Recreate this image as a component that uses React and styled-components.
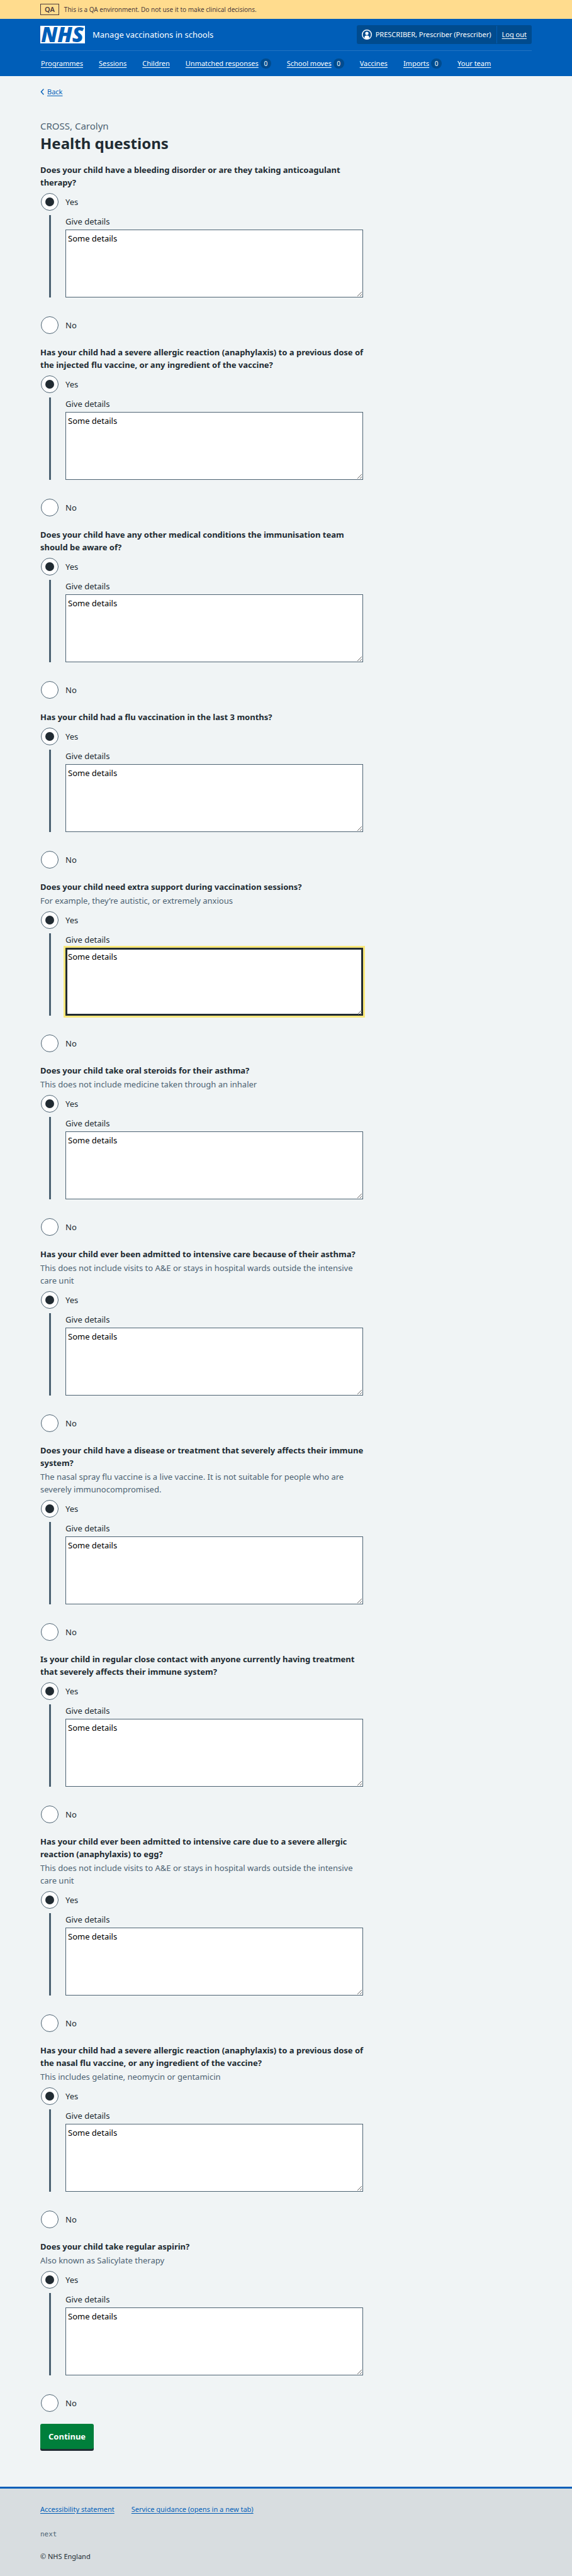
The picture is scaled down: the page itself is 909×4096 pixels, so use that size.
import React from "react";
import styled, { createGlobalStyle } from "styled-components";

const color = {
  blue: "#005eb8",
  darkBlue: "#004b8e",
  rule: "#2373c2",
  text: "#212b32",
  secondary: "#4c6272",
  page: "#f0f4f5",
  footer: "#d8dde0",
  green: "#007f3b",
  focus: "#fae87a",
  banner: "#ffdc8e",
  bannerText: "#4d3b3c",
};

const GlobalStyle = createGlobalStyle`
  *, *::before, *::after { box-sizing: border-box; }
  body {
    margin: 0;
    background: ${color.page};
    color: ${color.text};
    font-family: "Noto Sans", "Open Sans", sans-serif;
    font-size: 13px;
    line-height: 20px;
  }
`;

const Container = styled.div`
  max-width: 781px;
  margin: 0 auto;
`;

const Banner = styled.div`
  background: ${color.banner};
  color: ${color.bannerText};
`;

const BannerInner = styled(Container)`
  display: flex;
  align-items: center;
  gap: 8px;
  height: 30px;
  font-size: 10px;
`;

const EnvironmentTag = styled.strong`
  border: 1px solid currentColor;
  padding: 0 6px;
  font-size: 11px;
  font-weight: 600;
  line-height: 16px;
`;

const Header = styled.header`
  background: ${color.blue};
  color: #fff;
`;

const HeaderTop = styled(Container)`
  display: flex;
  align-items: center;
  height: 51px;
  border-bottom: 1px solid ${color.rule};
`;

const ServiceLink = styled.a`
  display: flex;
  align-items: center;
  gap: 12px;
  color: #fff;
  text-decoration: none;
`;

const Logo = styled.svg`
  display: block;
  width: 71px;
  height: 28px;
  overflow: visible;
  background: #fff;
  fill: ${color.blue};
  font-family: "Noto Sans", "Open Sans", sans-serif;
  font-size: 33px;
  font-style: italic;
  font-weight: 900;
`;

const Account = styled.div`
  display: flex;
  align-items: center;
  height: 30px;
  margin-left: auto;
  border-radius: 3px;
  background: ${color.darkBlue};
  font-size: 11px;
`;

const AccountItem = styled.div`
  display: flex;
  align-items: center;
  gap: 6px;
  height: 28px;
  padding: 0 8px;

  & + & {
    border-left: 1px solid ${color.blue};
  }
`;

const AccountIcon = styled.svg`
  width: 16px;
  height: 16px;
`;

const HeaderLink = styled.a`
  color: #fff;
  text-underline-offset: 2px;
`;

const Nav = styled(Container).attrs({ as: "nav" })`
  display: flex;
  align-items: center;
  gap: 25px;
  height: 40px;
  padding-left: 1px;
  font-size: 11px;
`;

const NavItem = styled.span`
  display: flex;
  align-items: center;
  gap: 3px;
  white-space: nowrap;
`;

const Count = styled.span`
  width: 17px;
  border-radius: 8px;
  background: ${color.darkBlue};
  font-size: 10px;
  line-height: 16px;
  text-align: center;
`;

const Main = styled(Container).attrs({ as: "main" })`
  padding: 17px 0 57px;
`;

const BackLink = styled.a`
  display: flex;
  align-items: center;
  gap: 5px;
  width: fit-content;
  color: ${color.blue};
  font-size: 11px;
  line-height: 16px;
  text-underline-offset: 2px;
`;

const Chevron = styled.svg`
  width: 6px;
  height: 10px;
`;

const Column = styled.form`
  max-width: 521px;
  margin-top: 34px;
`;

const Caption = styled.span`
  display: block;
  color: ${color.secondary};
  font-size: 15px;
  font-weight: 400;
  line-height: 24px;
`;

const Title = styled.h1`
  margin: 0 0 16px;
  font-size: 24px;
  font-weight: 700;
  line-height: 32px;
`;

const Fieldset = styled.fieldset`
  min-width: 0;
  margin: 0 0 19px;
  border: 0;
  padding: 0;
`;

const Legend = styled.legend`
  padding: 0;
  font-weight: 700;
`;

const Hint = styled.div`
  margin-top: 2px;
  color: ${color.secondary};
`;

const Choice = styled.div`
  display: flex;
  align-items: center;
  gap: 11px;
  margin: ${(p) => (p.$after ? 30 : 7)}px 0 0 1px;
`;

const Radio = styled.input`
  display: grid;
  place-items: center;
  appearance: none;
  width: 28px;
  height: 28px;
  margin: 0;
  border: 1px solid ${color.secondary};
  border-radius: 50%;
  background: #fff;

  &:checked::before {
    content: "";
    width: 14px;
    height: 14px;
    border-radius: 50%;
    background: ${color.text};
  }
`;

const Conditional = styled.div`
  margin: 7px 8px 0 14px;
  border-left: 3px solid ${color.secondary};
  padding-left: 23px;
`;

const DetailsLabel = styled.label`
  display: block;
  margin-bottom: 3px;
`;

const Details = styled.textarea`
  display: block;
  width: 100%;
  height: 108px;
  margin: 0;
  border: 1px solid ${(p) => (p.$active ? color.text : color.secondary)};
  border-radius: 0;
  outline: ${(p) => (p.$active ? `3px solid ${color.focus}` : "none")};
  box-shadow: ${(p) => (p.$active ? `inset 0 0 0 2px ${color.text}` : "none")};
  padding: 3px;
  background: #fff;
  color: #000;
  font: inherit;
  resize: vertical;
`;

const Submit = styled.button`
  display: block;
  margin: 0 0 3px;
  border: 0;
  border-radius: 3px;
  padding: 10px 13px;
  background: ${color.green};
  box-shadow: 0 3px 0 ${color.text};
  color: #fff;
  font: inherit;
  font-weight: 700;
`;

const Footer = styled.footer`
  border-top: 3px solid ${color.blue};
  padding: 25px 0 23px;
  background: ${color.footer};
  font-size: 11px;
  line-height: 16px;
`;

const FooterLinks = styled.div`
  display: flex;
  gap: 27px;
  margin-bottom: 24px;
`;

const FooterLink = styled.a`
  color: ${color.blue};
  text-underline-offset: 2px;
`;

const Version = styled.code`
  display: block;
  margin-bottom: 19px;
  color: ${color.secondary};
  font-family: "DejaVu Sans Mono", monospace;
  font-size: 11px;
`;

const navigation = [
  { label: "Programmes" },
  { label: "Sessions" },
  { label: "Children" },
  { label: "Unmatched responses", count: 0 },
  { label: "School moves", count: 0 },
  { label: "Vaccines" },
  { label: "Imports", count: 0 },
  { label: "Your team" },
];

const questions = [
  { text: "Does your child have a bleeding disorder or are they taking anticoagulant therapy?" },
  { text: "Has your child had a severe allergic reaction (anaphylaxis) to a previous dose of the injected flu vaccine, or any ingredient of the vaccine?" },
  { text: "Does your child have any other medical conditions the immunisation team should be aware of?" },
  { text: "Has your child had a flu vaccination in the last 3 months?" },
  {
    text: "Does your child need extra support during vaccination sessions?",
    hint: "For example, they’re autistic, or extremely anxious",
    active: true,
  },
  {
    text: "Does your child take oral steroids for their asthma?",
    hint: "This does not include medicine taken through an inhaler",
  },
  {
    text: "Has your child ever been admitted to intensive care because of their asthma?",
    hint: "This does not include visits to A&E or stays in hospital wards outside the intensive care unit",
  },
  {
    text: "Does your child have a disease or treatment that severely affects their immune system?",
    hint: "The nasal spray flu vaccine is a live vaccine. It is not suitable for people who are severely immunocompromised.",
  },
  { text: "Is your child in regular close contact with anyone currently having treatment that severely affects their immune system?" },
  {
    text: "Has your child ever been admitted to intensive care due to a severe allergic reaction (anaphylaxis) to egg?",
    hint: "This does not include visits to A&E or stays in hospital wards outside the intensive care unit",
  },
  {
    text: "Has your child had a severe allergic reaction (anaphylaxis) to a previous dose of the nasal flu vaccine, or any ingredient of the vaccine?",
    hint: "This includes gelatine, neomycin or gentamicin",
  },
  { text: "Does your child take regular aspirin?", hint: "Also known as Salicylate therapy" },
];

function Question({ id, text, hint, active }) {
  return (
    <Fieldset aria-describedby={hint ? `${id}-hint` : undefined}>
      <Legend>{text}</Legend>
      {hint && <Hint id={`${id}-hint`}>{hint}</Hint>}
      <Choice>
        <Radio type="radio" id={`${id}-yes`} name={id} value="yes" defaultChecked />
        <label htmlFor={`${id}-yes`}>Yes</label>
      </Choice>
      <Conditional>
        <DetailsLabel htmlFor={`${id}-details`}>Give details</DetailsLabel>
        <Details id={`${id}-details`} defaultValue="Some details" $active={active} />
      </Conditional>
      <Choice $after>
        <Radio type="radio" id={`${id}-no`} name={id} value="no" />
        <label htmlFor={`${id}-no`}>No</label>
      </Choice>
    </Fieldset>
  );
}

export default function App() {
  return (
    <>
      <GlobalStyle />
      <Banner>
        <BannerInner>
          <EnvironmentTag>QA</EnvironmentTag>
          <span>This is a QA environment. Do not use it to make clinical decisions.</span>
        </BannerInner>
      </Banner>
      <Header>
        <HeaderTop>
          <ServiceLink href="#">
            <Logo viewBox="0 0 71 28" role="img" aria-label="NHS">
              <text x="35" y="26" textAnchor="middle">NHS</text>
            </Logo>
            <span>Manage vaccinations in schools</span>
          </ServiceLink>
          <Account>
            <AccountItem>
              <AccountIcon viewBox="0 0 22 22" aria-hidden="true">
                <circle cx="11" cy="11" r="10" fill="none" stroke="#fff" strokeWidth="2" />
                <circle cx="11" cy="8.4" r="3.6" fill="#fff" />
                <path d="M6 19v-2.2a3.8 3.8 0 0 1 3.8-3.8h2.4a3.8 3.8 0 0 1 3.8 3.8V19l-5 2z" fill="#fff" />
              </AccountIcon>
              <span>PRESCRIBER, Prescriber (Prescriber)</span>
            </AccountItem>
            <AccountItem>
              <HeaderLink href="#">Log out</HeaderLink>
            </AccountItem>
          </Account>
        </HeaderTop>
        <Nav aria-label="Menu">
          {navigation.map(({ label, count }) => (
            <NavItem key={label}>
              <HeaderLink href="#">{label}</HeaderLink>
              {count !== undefined && <Count>{count}</Count>}
            </NavItem>
          ))}
        </Nav>
      </Header>
      <Main>
        <BackLink href="#">
          <Chevron viewBox="0 0 6 10" aria-hidden="true">
            <path d="M5 1 1.4 5 5 9" fill="none" stroke="currentColor" strokeWidth="1.4" strokeLinecap="round" />
          </Chevron>
          Back
        </BackLink>
        <Column>
          <Caption>CROSS, Carolyn</Caption>
          <Title>Health questions</Title>
          {questions.map((question, index) => (
            <Question key={question.text} id={`question-${index + 1}`} {...question} />
          ))}
          <Submit type="button">Continue</Submit>
        </Column>
      </Main>
      <Footer>
        <Container>
          <FooterLinks>
            <FooterLink href="#">Accessibility statement</FooterLink>
            <FooterLink href="#">Service guidance (opens in a new tab)</FooterLink>
          </FooterLinks>
          <Version>next</Version>
          <div>© NHS England</div>
        </Container>
      </Footer>
    </>
  );
}
